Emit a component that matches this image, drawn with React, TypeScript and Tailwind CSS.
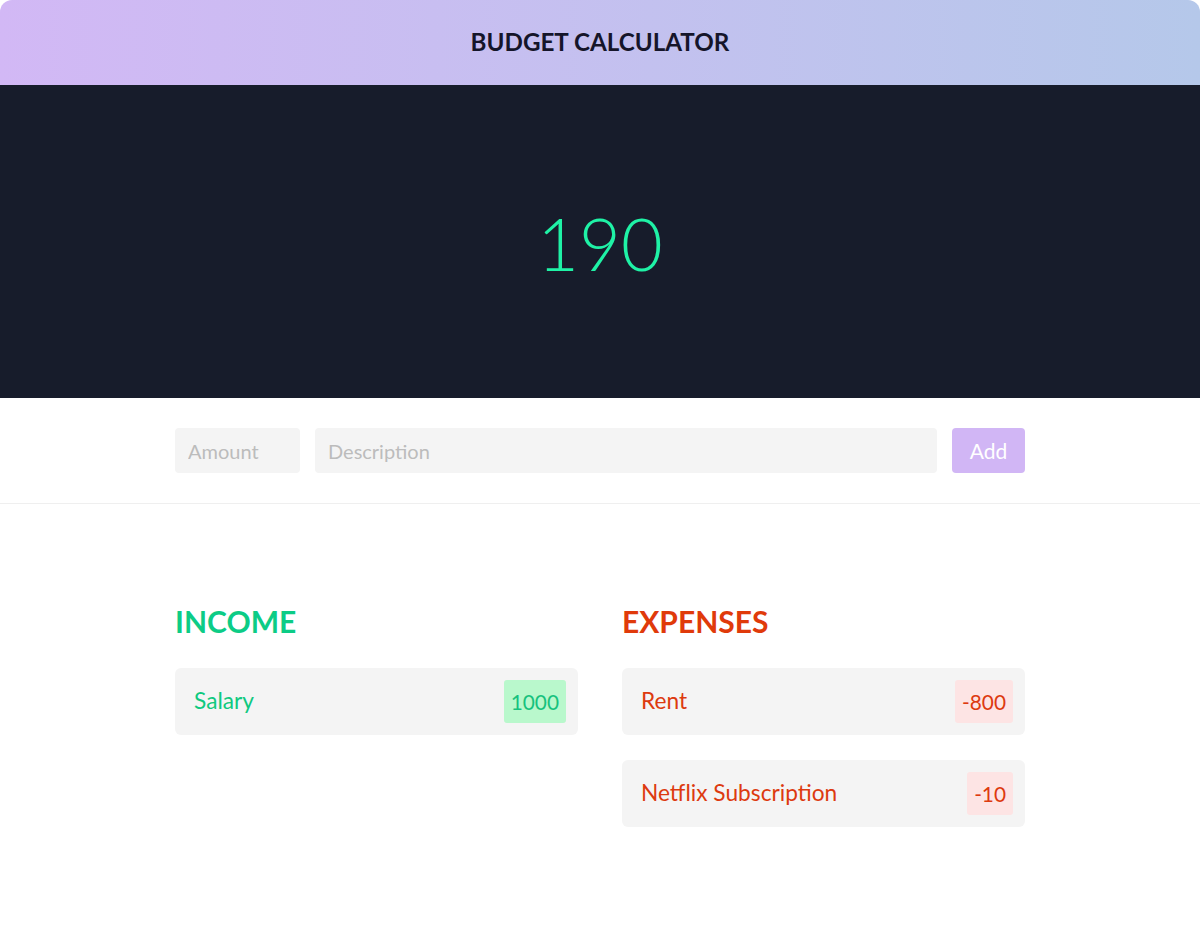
import React from "react";

type Entry = { id: number; label: string; amount: number };

const income: Entry[] = [{ id: 1, label: "Salary", amount: 1000 }];
const expenses: Entry[] = [
  { id: 2, label: "Rent", amount: -800 },
  { id: 3, label: "Netflix Subscription", amount: -10 },
];

function Row({ entry, positive }: { entry: Entry; positive: boolean }) {
  return (
    <div className="flex h-[67px] items-center justify-between rounded-md bg-[#f4f4f4] pl-[19px] pr-3">
      <span className={`text-[22.7px] ${positive ? "text-[#0fc97f]" : "text-[#dd3a0f]"}`}>
        {entry.label}
      </span>
      <span
        className={`flex h-[43px] items-center rounded-[3px] px-[7px] text-[20.8px] ${
          positive ? "bg-[#b9f8cc] text-[#17c27e]" : "bg-[#fde4e4] text-[#dd3a0f]"
        }`}
      >
        {entry.amount}
      </span>
    </div>
  );
}

export default function App() {
  const total = [...income, ...expenses].reduce((s, e) => s + e.amount, 0);

  return (
    <div className="min-h-[950px] bg-white font-['Lato','Noto_Sans',sans-serif]">
      {/* Header */}
      <header className="flex h-[85px] items-center justify-center rounded-t-[12px] bg-gradient-to-r from-[#d2b8f5] to-[#b5c8ea]">
        <h1 className="text-[24.2px] font-bold text-[#15152a]">BUDGET CALCULATOR</h1>
      </header>

      {/* Total */}
      <section className="flex h-[313px] items-center justify-center bg-[#171c2b]">
        <span className="mt-[3px] text-[72px] font-light text-[#1ff2a6]">{total}</span>
      </section>

      {/* Form */}
      <div className="border-b border-[#efefef] pb-[30px] pt-[30px]">
        <form className="mx-auto flex w-[850px] gap-[15px]" onSubmit={(e) => e.preventDefault()}>
          <input
            placeholder="Amount"
            className="h-[45px] w-[125px] rounded-[4px] bg-[#f4f4f4] px-[13px] text-[20px] text-gray-700 outline-none placeholder:text-[#bcbcbc]"
          />
          <input
            placeholder="Description"
            className="h-[45px] flex-1 rounded-[4px] bg-[#f4f4f4] px-[13px] text-[20px] text-gray-700 outline-none placeholder:text-[#bcbcbc]"
          />
          <button className="h-[45px] w-[73px] rounded-[4px] bg-[#d1b6f5] text-[21px] text-white">Add</button>
        </form>
      </div>

      {/* Lists */}
      <div className="mx-auto mt-[97px] grid w-[850px] grid-cols-2 gap-[44px]">
        <div>
          <h2 className="mb-[27px] text-[30px] font-bold leading-[40px] text-[#0ccc86]">INCOME</h2>
          <div className="flex flex-col gap-[25px]">
            {income.map((e) => (
              <Row key={e.id} entry={e} positive />
            ))}
          </div>
        </div>
        <div>
          <h2 className="mb-[27px] text-[30px] font-bold leading-[40px] text-[#e03a0a]">EXPENSES</h2>
          <div className="flex flex-col gap-[25px]">
            {expenses.map((e) => (
              <Row key={e.id} entry={e} positive={false} />
            ))}
          </div>
        </div>
      </div>
    </div>
  );
}
